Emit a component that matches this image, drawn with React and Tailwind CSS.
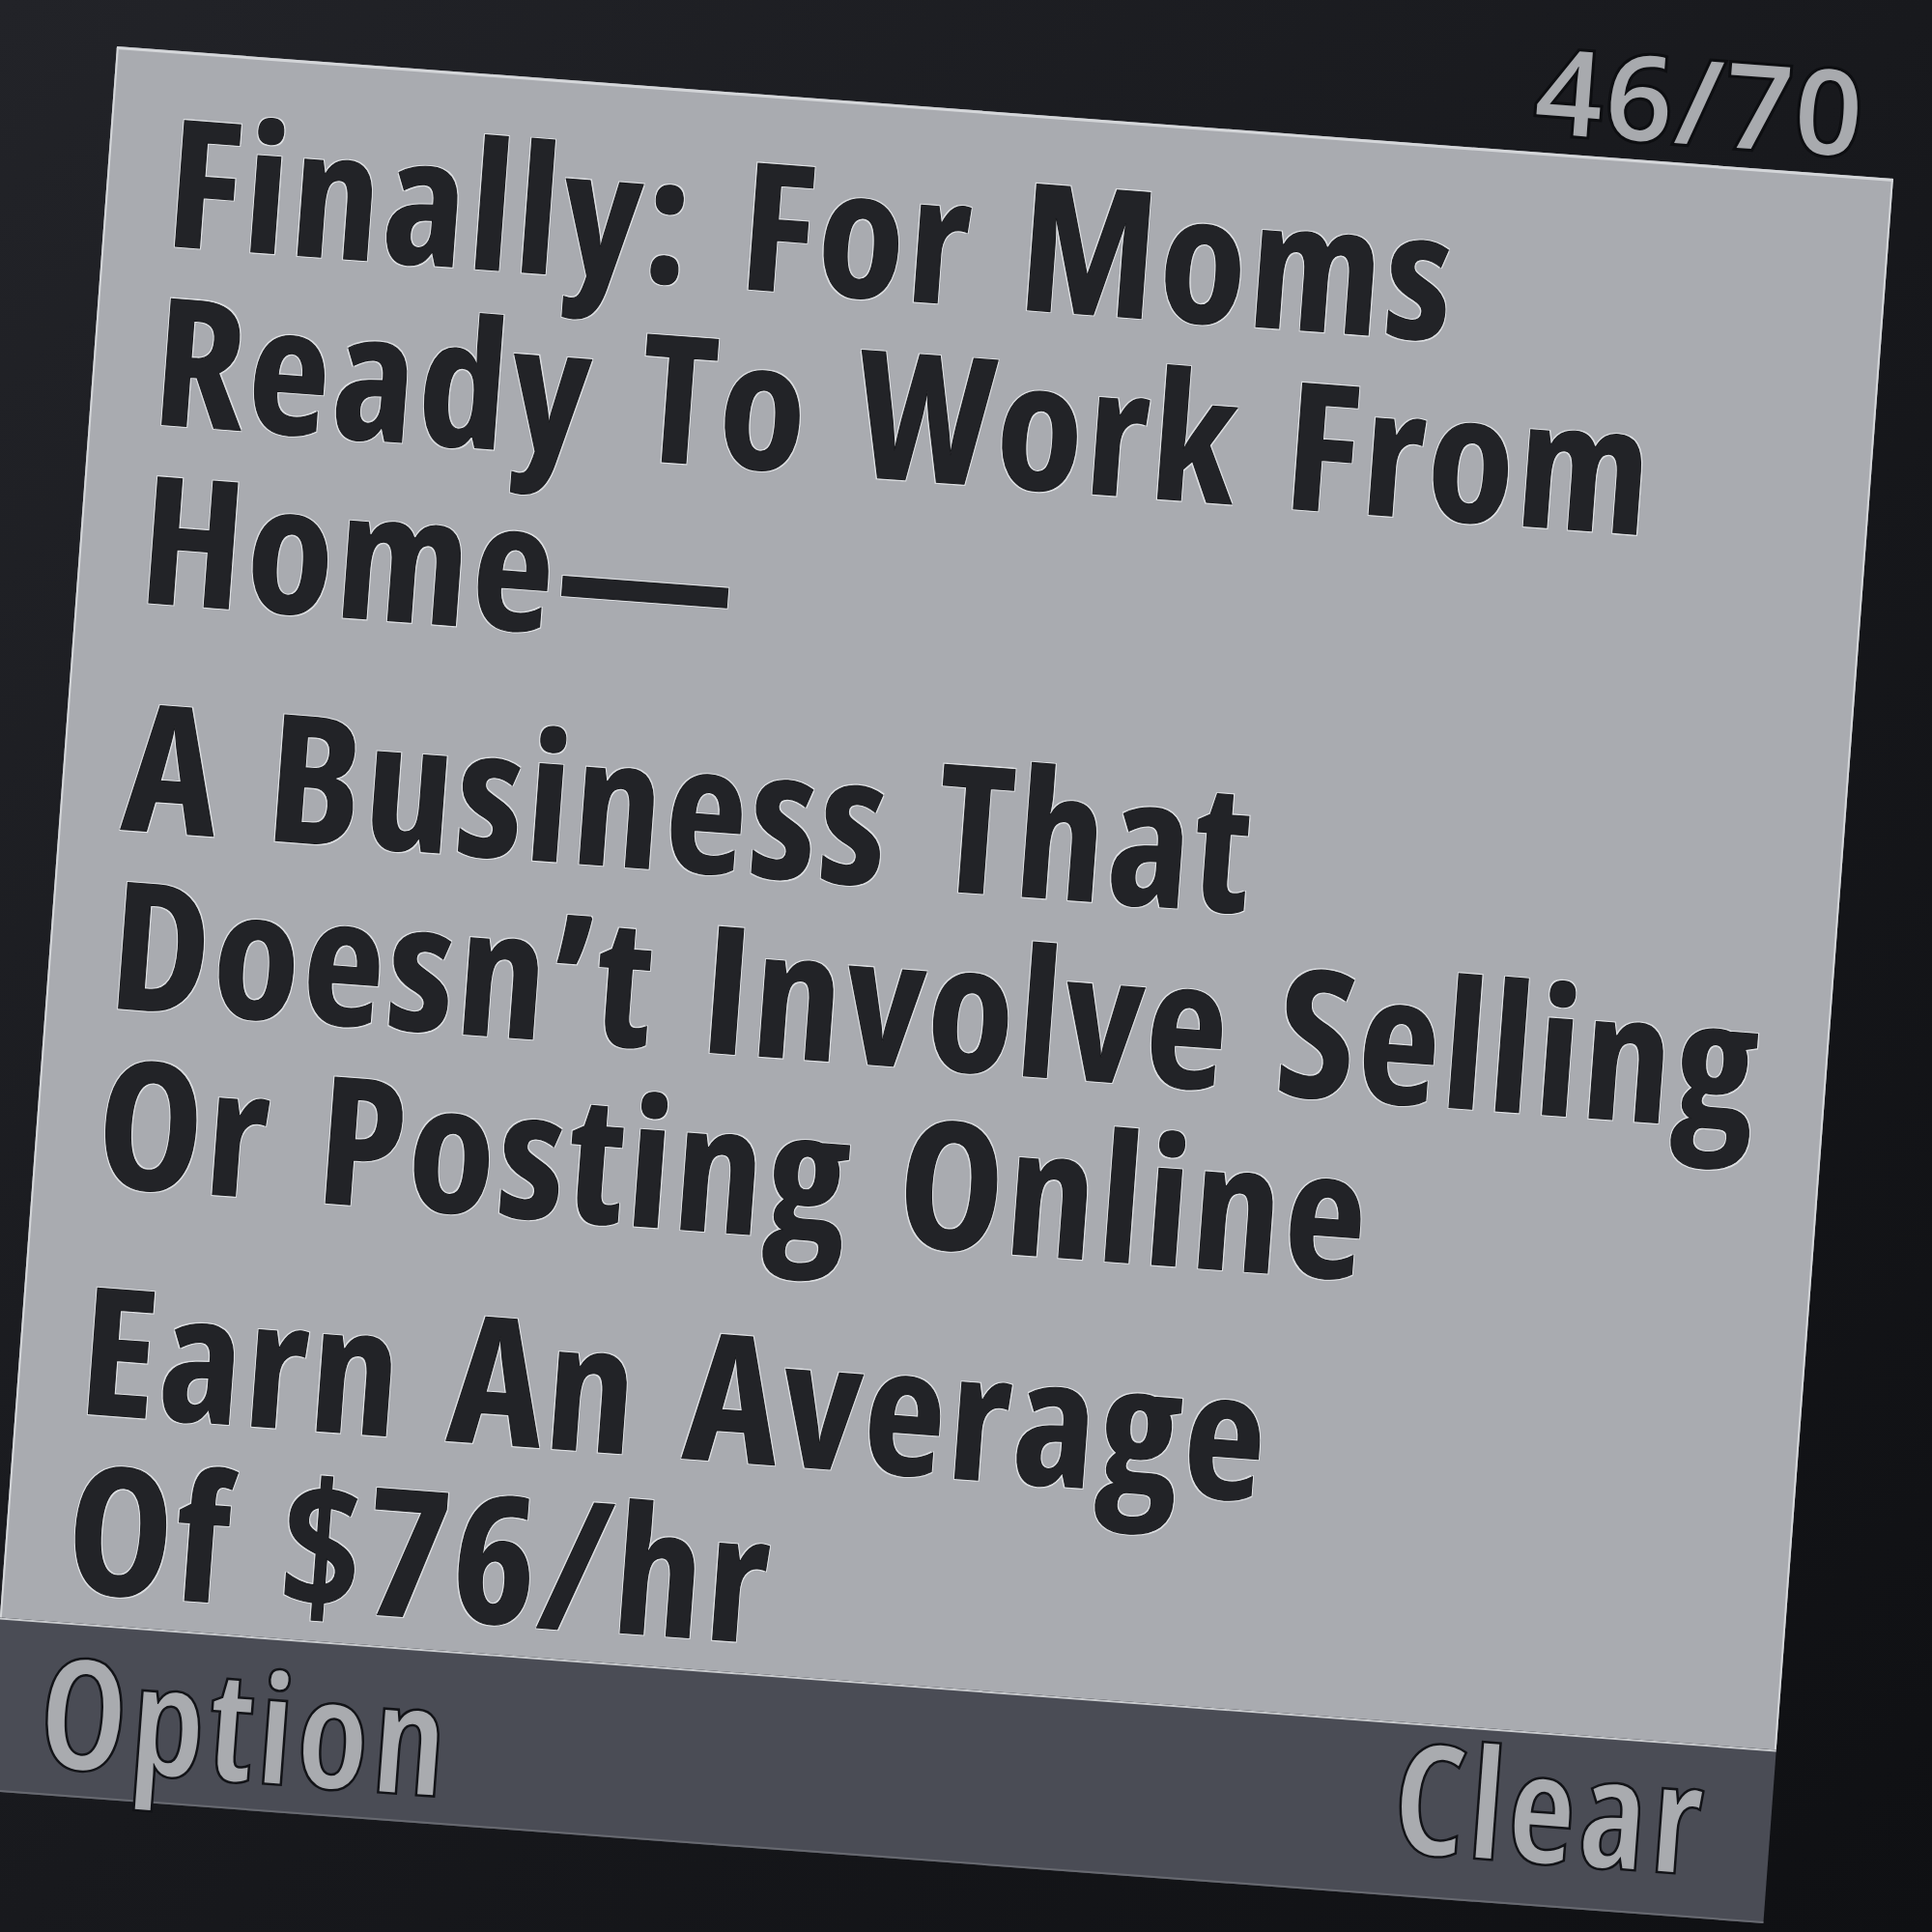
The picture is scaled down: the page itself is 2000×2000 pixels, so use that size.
import React from "react";

const paragraphs = [
  ["Finally: For Moms", "Ready To Work From", "Home—"],
  ["A Business That", "Doesn’t Involve Selling", "Or Posting Online"],
  ["Earn An Average", "Of $76/hr"],
];

const SoftKey = ({ children, className }) => (
  <span
    className={
      "font-['Open_Sans',sans-serif] text-[156px] leading-none font-semibold [font-stretch:75%] tracking-[6px] text-[#a9abaf] [-webkit-text-stroke:5px_#121317] [paint-order:stroke_fill] " +
      className
    }
  >
    {children}
  </span>
);

export default function App() {
  return (
    <div className="h-[2000px] w-[2000px] overflow-hidden bg-linear-to-br from-[#222328] via-[#18191d] to-[#0f1013]">
      <div className="ml-[121px] mt-[-82px] flex w-[1844px] flex-col rotate-[4.26deg] origin-[0_130px]">
        {/* character counter */}
        <div className="flex h-[130px] items-end justify-end pr-[34px] pb-[6px]">
          <span className="font-['Open_Sans',sans-serif] text-[122px] leading-none font-semibold tracking-[3px] text-[#a8aaae] [-webkit-text-stroke:6px_#0d0e11] [paint-order:stroke_fill]">
            46/70
          </span>
        </div>

        {/* message body */}
        <div className="h-[1631px] border-x-2 border-t-[3px] border-[#d4d6d9] bg-[#a9abb0] pl-[62px] pt-[36px] font-['Open_Sans',sans-serif] text-[183px] leading-[185px] font-bold [font-stretch:75%] tracking-[4px] [word-spacing:12px] text-[#222327] [-webkit-text-stroke:1px_#18191c] [text-shadow:1.5px_1.5px_0_#dcdee1,-1.5px_-1.5px_0_#dcdee1,1.5px_-1.5px_0_#dcdee1,-1.5px_1.5px_0_#dcdee1]">
          {paragraphs.map((lines, i) => (
            <div key={i} className={i > 0 ? "mt-[51px]" : ""}>
              {lines.map((line) => (
                <div key={line} className="whitespace-nowrap">
                  {line}
                </div>
              ))}
            </div>
          ))}
        </div>

        {/* soft keys */}
        <div className="flex h-[180px] items-start justify-between border-t-2 border-b-2 border-t-[#c9cbce] border-b-[#676970] bg-[#4a4c55] pl-[50px] pr-[66px]">
          <SoftKey className="mt-[10px]">Option</SoftKey>
          <SoftKey className="mt-[-6px]">Clear</SoftKey>
        </div>
      </div>
    </div>
  );
}
